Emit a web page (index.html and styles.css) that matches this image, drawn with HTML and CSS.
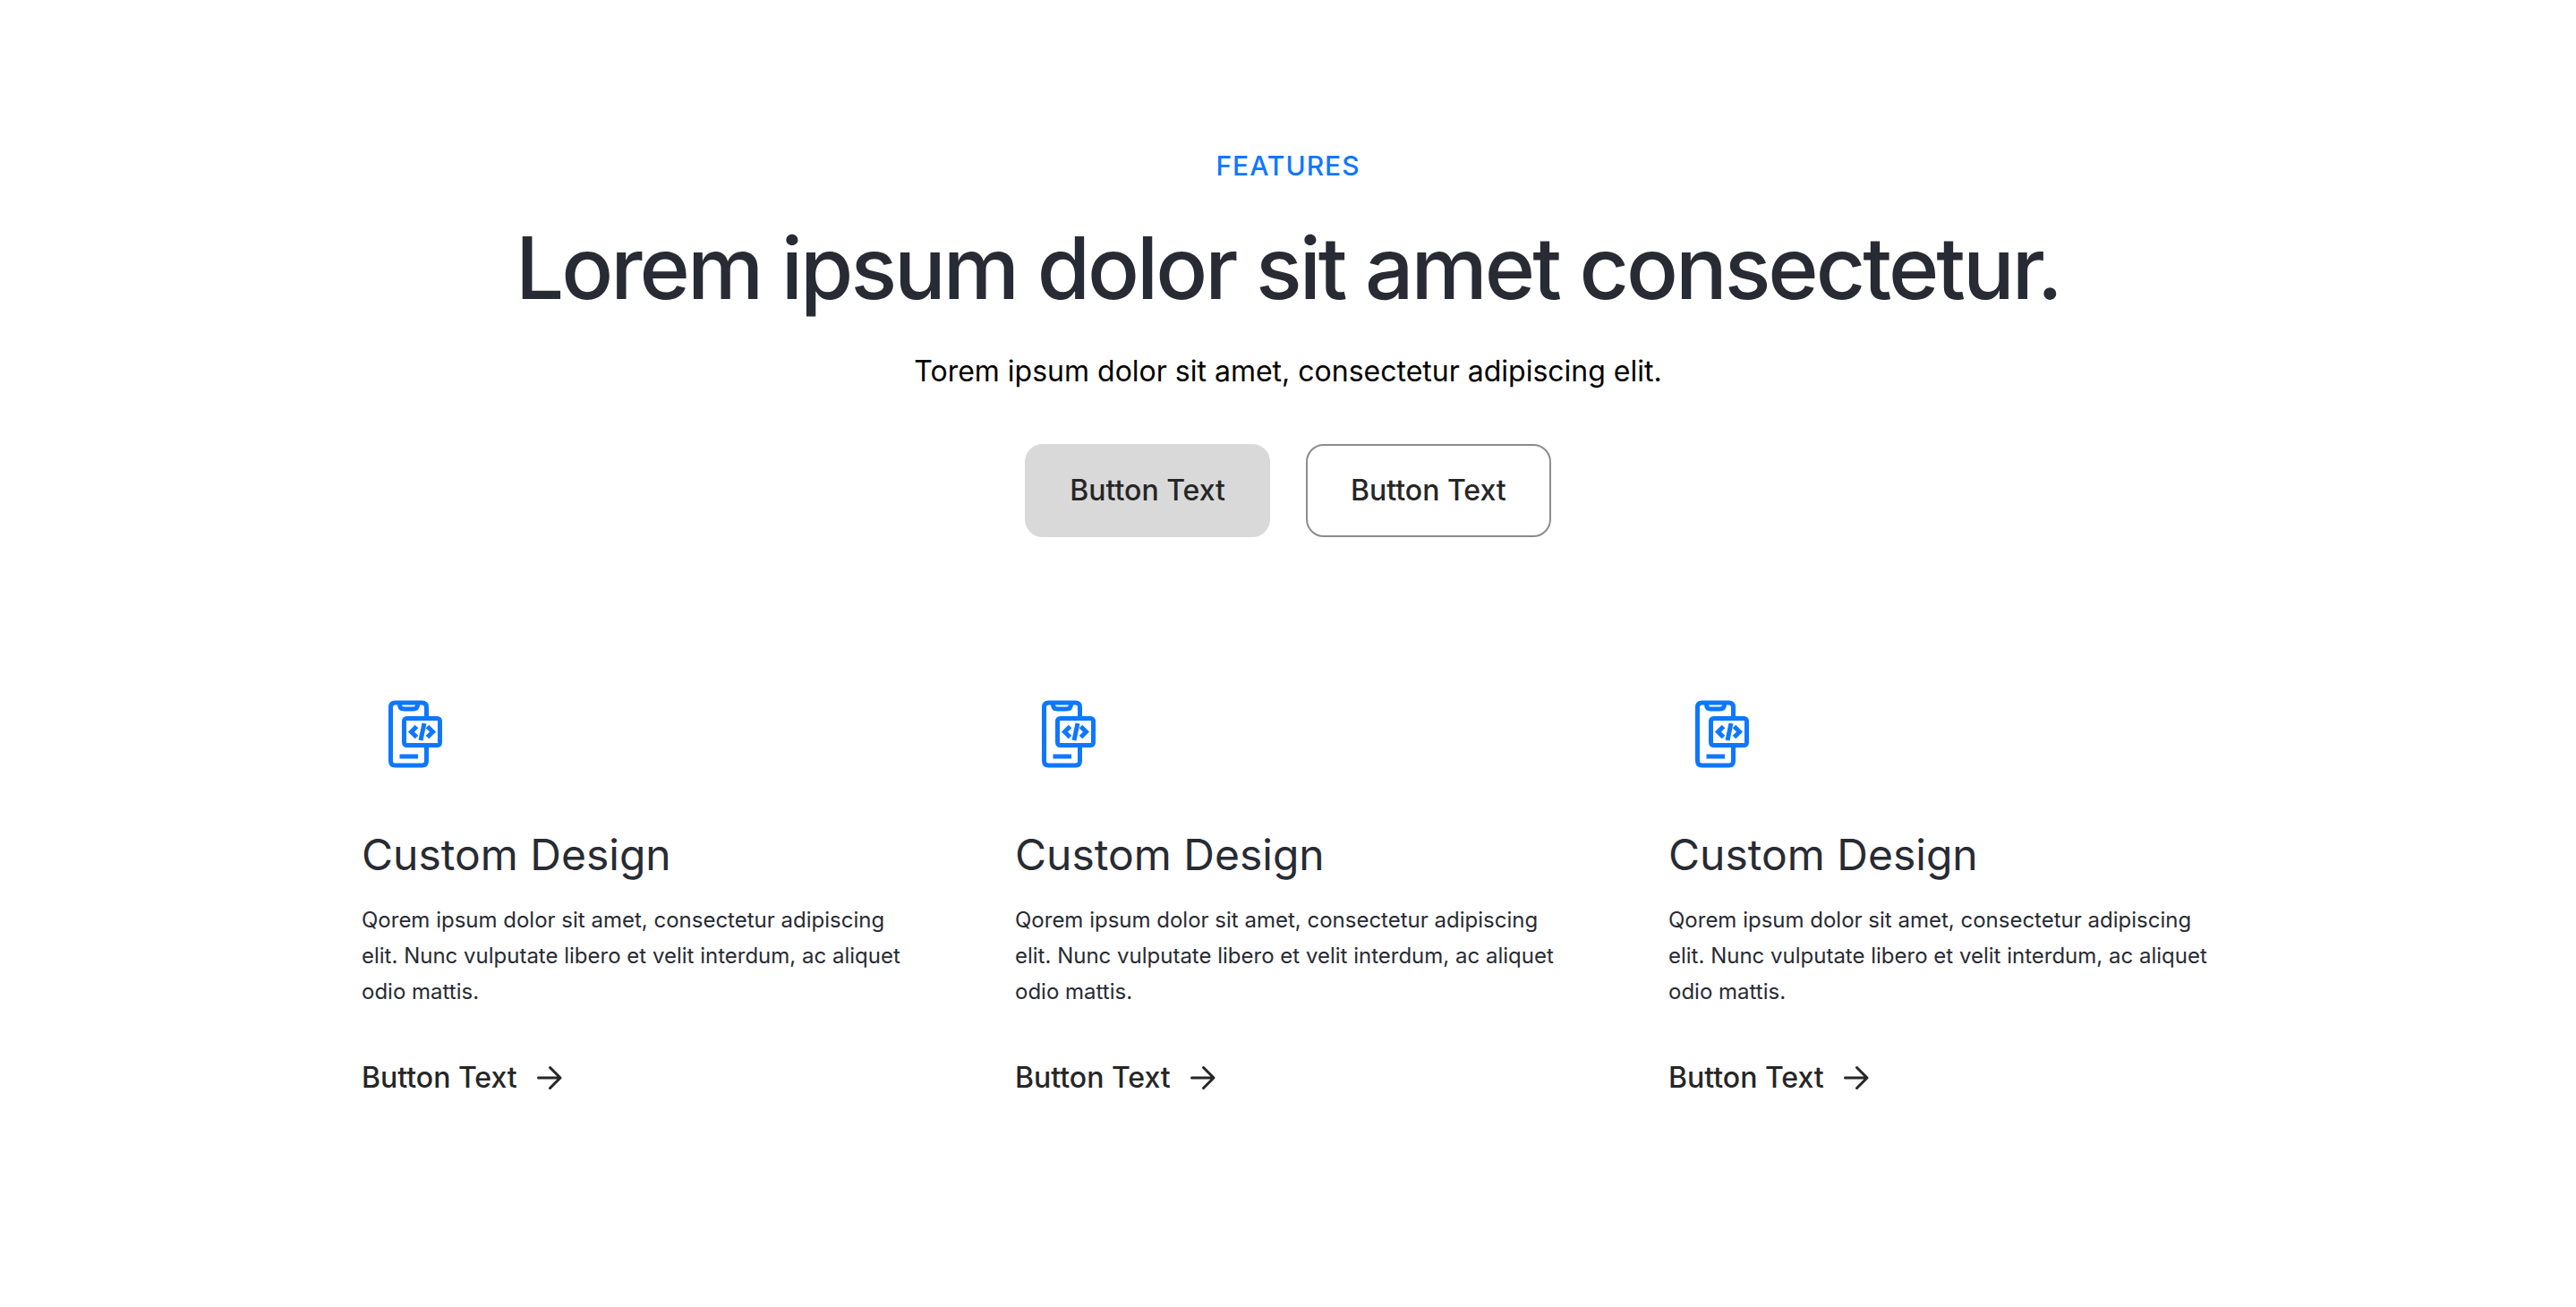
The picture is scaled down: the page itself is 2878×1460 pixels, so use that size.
FILE: index.html
```html
<!DOCTYPE html>
<html lang="en">
<head>
<meta charset="utf-8">
<meta name="viewport" content="width=device-width, initial-scale=1">
<title>Features</title>
<link rel="stylesheet" href="styles.css">
</head>
<body>
<svg width="0" height="0" class="sprite" aria-hidden="true">
  <symbol id="phone-code" viewBox="0 0 120 120">
    <g fill="none" stroke="currentColor" stroke-width="5">
      <path d="M72.500 40V30q0-5-5-5H37.500q-5 0-5 5v60q0 5 5 5h30q5 0 5-5V73"/>
      <path d="M42.500 25v2q0 5 5 5h10q5 0 5-5v-2"/>
      <rect x="47.500" y="42.500" width="40" height="30" rx="3"/>
      <path d="M42.500 85H63"/>
      <path d="M61.500 51.500L55.500 57.500l6 6M73.500 51.500l6 6-6 6" stroke-width="5"/>
      <path d="M70 48l-4 19" stroke-width="5"/>
    </g>
  </symbol>
  <symbol id="arrow" viewBox="0 0 32 32">
    <path d="M3.500 16H28M16.500 4.500L28 16 16.500 27.500" fill="none" stroke="currentColor" stroke-width="3" stroke-linecap="round" stroke-linejoin="round"/>
  </symbol>
</svg>
<main class="features">
  <header class="intro">
    <p class="eyebrow">FEATURES</p>
    <h1 class="title">Lorem ipsum dolor sit amet consectetur.</h1>
    <p class="lead">Torem ipsum dolor sit amet, consectetur adipiscing elit.</p>
    <div class="actions">
      <button type="button" class="button button-filled">Button Text</button>
      <button type="button" class="button button-outline">Button Text</button>
    </div>
  </header>
  <section class="cards">
    <article class="card">
      <svg class="card-icon" aria-hidden="true"><use href="#phone-code"/></svg>
      <h2 class="card-title">Custom Design</h2>
      <p class="card-text">Qorem ipsum dolor sit amet, consectetur adipiscing elit. Nunc vulputate libero et velit interdum, ac aliquet odio mattis.</p>
      <a class="card-link" href="#">Button Text <svg class="arrow" aria-hidden="true"><use href="#arrow"/></svg></a>
    </article>
    <article class="card">
      <svg class="card-icon" aria-hidden="true"><use href="#phone-code"/></svg>
      <h2 class="card-title">Custom Design</h2>
      <p class="card-text">Qorem ipsum dolor sit amet, consectetur adipiscing elit. Nunc vulputate libero et velit interdum, ac aliquet odio mattis.</p>
      <a class="card-link" href="#">Button Text <svg class="arrow" aria-hidden="true"><use href="#arrow"/></svg></a>
    </article>
    <article class="card">
      <svg class="card-icon" aria-hidden="true"><use href="#phone-code"/></svg>
      <h2 class="card-title">Custom Design</h2>
      <p class="card-text">Qorem ipsum dolor sit amet, consectetur adipiscing elit. Nunc vulputate libero et velit interdum, ac aliquet odio mattis.</p>
      <a class="card-link" href="#">Button Text <svg class="arrow" aria-hidden="true"><use href="#arrow"/></svg></a>
    </article>
  </section>
</main>
</body>
</html>
```
FILE: styles.css
```css
* {
  box-sizing: border-box;
}

body {
  margin: 0;
  background: #fff;
  color: #282b33;
  font-family: Inter, "Liberation Sans", sans-serif;
}

h1, h2, p {
  margin: 0;
}

.sprite {
  display: block;
}

.features {
  max-width: 2150px;
  margin: 0 auto;
  padding: 165px 40px 160px;
}

.intro {
  display: flex;
  flex-direction: column;
  align-items: center;
  text-align: center;
}

.eyebrow {
  color: #0f77ff;
  font-size: 30px;
  font-weight: 500;
  line-height: 40px;
  letter-spacing: 1px;
}

.title {
  margin-top: 34px;
  font-size: 96px;
  font-weight: 500;
  line-height: 120px;
  letter-spacing: -3px;
}

.lead {
  margin-top: 36px;
  color: #000;
  font-size: 32px;
  line-height: 40px;
}

.actions {
  display: flex;
  flex-wrap: wrap;
  justify-content: center;
  gap: 40px;
  margin-top: 61px;
}

.button {
  padding: 30px 48px;
  border: 2px solid #d9d9d9;
  border-radius: 20px;
  color: #262626;
  font: 500 32px/40px Inter, "Liberation Sans", sans-serif;
  cursor: pointer;
}

.button-filled {
  background: #d9d9d9;
}

.button-outline {
  border-color: #8c8c8c;
  background: #fff;
}

.cards {
  display: grid;
  grid-template-columns: repeat(auto-fit, minmax(480px, 1fr));
  gap: 120px;
  margin-top: 160px;
}

.card {
  display: flex;
  flex-direction: column;
  align-items: flex-start;
}

.card-icon {
  width: 120px;
  height: 120px;
  color: #0f77ff;
}

.card-title {
  margin-top: 46px;
  font-size: 48px;
  font-weight: 400;
  line-height: 58px;
}

.card-text {
  margin-top: 24px;
  font-size: 24px;
  line-height: 40px;
}

.card-link {
  display: flex;
  align-items: center;
  gap: 20px;
  margin-top: 56px;
  color: #262626;
  font-size: 32px;
  font-weight: 500;
  line-height: 40px;
  text-decoration: none;
}

.arrow {
  width: 32px;
  height: 32px;
}
```
